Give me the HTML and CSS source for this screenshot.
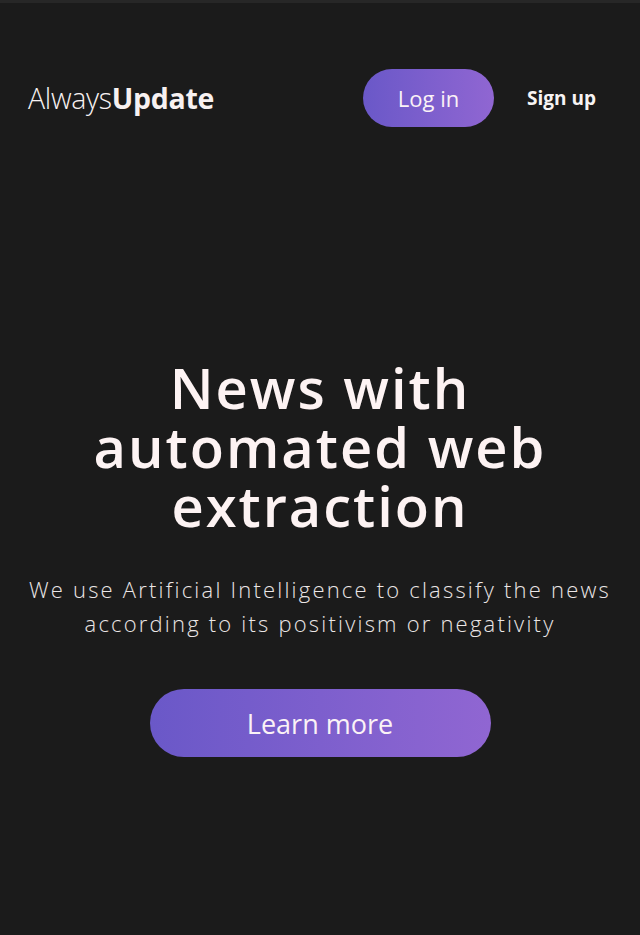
FILE: index.html
```html
<!DOCTYPE html>
<html lang="en">
<head>
<meta charset="utf-8">
<title>AlwaysUpdate</title>
<link rel="stylesheet" href="styles.css">
</head>
<body>
<header class="nav">
  <div class="logo"><span class="logo-light">Always</span><span class="logo-bold">Update</span></div>
  <div class="nav-actions">
    <a class="btn btn-login" href="#">Log in</a>
    <a class="signup" href="#">Sign up</a>
  </div>
</header>
<main class="hero">
  <h1 class="hero-title">News with automated web extraction</h1>
  <p class="hero-text">We use Artificial Intelligence to classify the news according to its positivism or negativity</p>
  <a class="btn btn-learn" href="#">Learn more</a>
</main>
</body>
</html>
```
FILE: styles.css
```css
html, body {
  margin: 0;
  padding: 0;
}
body {
  background: #1b1b1b;
  border-top: 3px solid #272727;
  min-height: 932px;
  font-family: "Open Sans", "Noto Sans", sans-serif;
  color: #fdf3f3;
}
a {
  text-decoration: none;
  color: inherit;
}
.nav {
  display: flex;
  align-items: center;
  justify-content: space-between;
  padding: 66px 44px 0 28px;
}
.logo {
  font-size: 28.5px;
  color: #f7f1f1;
  letter-spacing: -0.3px;
}
.logo-light { font-weight: 300; }
.logo-bold { font-weight: 700; }
.nav-actions {
  display: flex;
  align-items: center;
  gap: 33px;
}
.btn {
  display: flex;
  align-items: center;
  justify-content: center;
  border-radius: 999px;
  background: linear-gradient(to right, #6a58c8, #9066d2);
  color: #fbf2f6;
}
.btn-login {
  width: 131px;
  height: 58px;
  font-size: 22px;
}
.signup {
  font-size: 19px;
  font-weight: 700;
  color: #f7f3f3;
}
.hero {
  display: flex;
  flex-direction: column;
  align-items: center;
  text-align: center;
  padding-top: 231px;
}
.hero-title {
  margin: 0;
  max-width: 520px;
  font-size: 56px;
  line-height: 59px;
  font-weight: 600;
  letter-spacing: 2px;
  color: #fdf3f3;
}
.hero-text {
  margin: 37px 0 0;
  max-width: 604px;
  font-size: 22px;
  line-height: 34px;
  font-weight: 300;
  letter-spacing: 2.2px;
  color: #ebe6e6;
}
.btn-learn {
  margin-top: 49px;
  width: 341px;
  height: 68px;
  font-size: 27px;
}
```
